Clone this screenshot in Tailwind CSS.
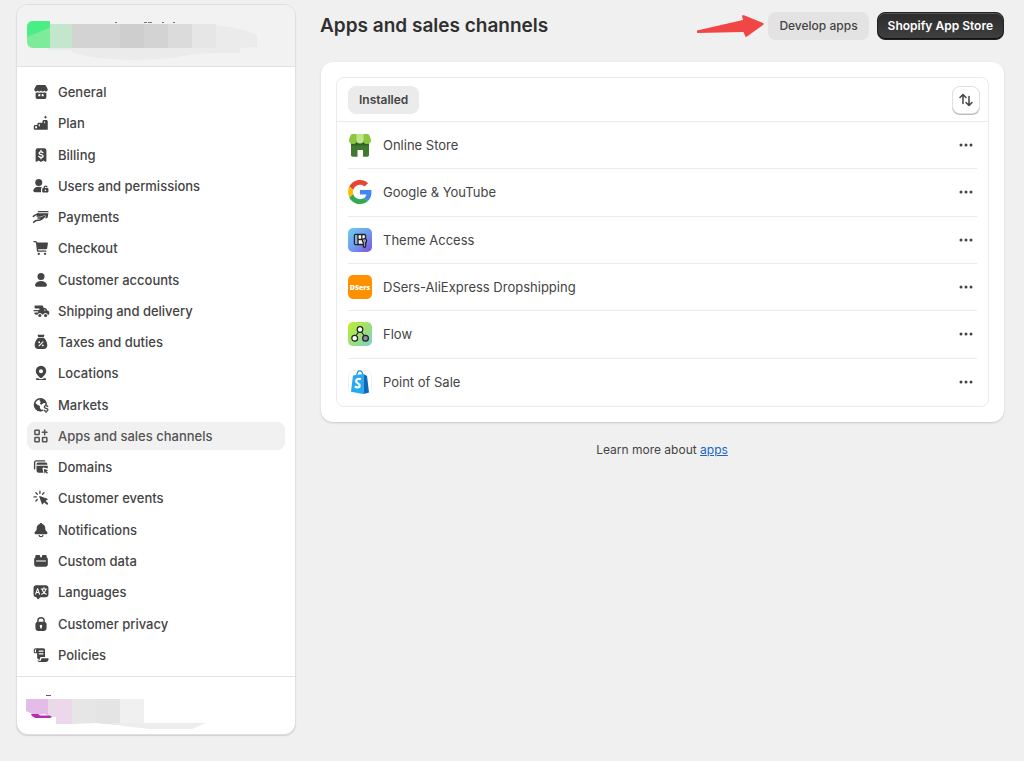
<!DOCTYPE html>
<html lang="en">
<head>
<meta charset="utf-8">
<meta name="viewport" content="width=device-width, initial-scale=1">
<title>Apps and sales channels</title>
<script src="https://cdn.jsdelivr.net/npm/@tailwindcss/browser@4"></script>
</head>
<body class="flex min-h-screen bg-[#f0f0f0] pt-1 pr-5 pb-[26px] pl-4 font-['Inter',sans-serif] text-[13px] leading-5 text-[#444]">

<aside class="flex w-[280px] shrink-0 flex-col overflow-hidden rounded-xl border border-[#dfdfdf] bg-white shadow-[0_1px_1px_#d0d0d0]">
  <header class="border-b border-[#e3e3e3] bg-[#f2f2f2] pl-[9px]">
    <!-- store badge with its name hidden -->
    <svg class="h-[61px] w-[240px]" viewBox="26 5 240 61" role="img" aria-label="Hidden store name">
      <path d="M72 48h138l30 5q-30-1-50 2-45 8-90 3-20-2-28-6z" fill="#ebebeb"/>
      <path d="M48 24h24v26H48z" fill="#c3e6cc"/>
      <path d="M48 48h24v2H48z" fill="#e5eee7"/>
      <path d="M33 21h17v27H33q-6 0-6-7V28q0-7 6-7z" fill="#7eeb9b"/>
      <path d="M33 21h15q2 0 2 2v3q0 2-6 4l-17 7V28q0-7 6-7z" fill="#4bee86"/>
      <path d="M72 24h48v24H72zM144 24h24v24h-24z" fill="#d3d3d3"/>
      <path d="M120 24h24v24h-24z" fill="#cecece"/>
      <path d="M168 24h24v24h-24z" fill="#dbdbdb"/>
      <path d="M192 24h24v29h-24z" fill="#e6e6e6"/>
      <path d="M216 25q30 4 41 10v12l-17 1v5h-24z" fill="#ebebeb"/>
      <path d="M192 48h24v5h-24z" fill="#ebebeb"/>
      <path d="M115 22h2v1h-2zM144 22h3v1h-3zM148 22h4v1h-4zM162 22h2v1h-2zM173 22h2v1h-2z" fill="#777"/>
    </svg>
  </header>

  <nav class="flex flex-1" aria-label="Settings">
    <ul class="flex flex-1 flex-col justify-between px-2.5 pt-[11px] pb-[7px] font-medium">
      <li><a href="#" class="flex h-7 items-center gap-2 rounded-lg pl-[5px]">
        <svg class="size-[18px]" viewBox="0 0 20 20" fill="currentColor"><path d="M6 2.2h8c.7 0 1.2.3 1.5.9l1.7 3.3c.2.4.3.8.3 1.2a2 2 0 0 1-3.8.7 2.2 2.2 0 0 1-3.7 0 2.2 2.2 0 0 1-3.7 0 2 2 0 0 1-3.8-.7c0-.4.1-.8.3-1.2l1.7-3.3c.3-.6.8-.9 1.5-.9z"/><path fill-rule="evenodd" d="M4 10.8c.9.1 1.800-.1 2.400-.6 1.100.8 2.600.8 3.600 0 1.100.8 2.600.8 3.600 0 .6.5 1.500.7 2.400.6v4.700c0 1.400-1 2.300-2.300 2.300H6.300C5 17.800 4 16.900 4 15.500zm4.300 1.500c-.7 0-1.300.6-1.300 1.200v1.200h2.200v-2.400zm2.500 0v2.400H13v-1.200c0-.6-.6-1.200-1.300-1.200z"/></svg>General</a></li>
      <li><a href="#" class="flex h-7 items-center gap-2 rounded-lg pl-[5px]">
        <svg class="size-[18px]" viewBox="0 0 20 20" fill="currentColor"><path d="m15 1.500.6 1.400 1.400.6-1.400.6-.6 1.400-.6-1.400-1.400-.6 1.400-.6z"/><path fill-rule="evenodd" d="M13.300 6.700h2.500c1 0 1.700.7 1.700 1.600v9.200h-14c-.9 0-1.500-.6-1.500-1.500v-2.300c0-1 .7-1.600 1.600-1.600h2.300v-.8c0-.9.700-1.600 1.600-1.600h4.100v-1.400c0-.9.700-1.600 1.700-1.600zM3.500 13.600v2.300h2.100v-2.300zm4-2.200v2.300h1.300v-2.300zm6-3v2h1v-2z"/></svg>Plan</a></li>
      <li><a href="#" class="flex h-7 items-center gap-2 rounded-lg pl-[5px]">
        <svg class="size-[18px]" viewBox="0 0 20 20"><path fill="currentColor" d="M4 5a2.500 2.500 0 0 1 2.500-2.500h7A2.500 2.500 0 0 1 16 5v11.800c0 .7-.8 1-1.300.6L12.800 16 10.500 17.500a1 1 0 0 1-1 0L7.200 16l-1.900 1.400c-.5.4-1.300.1-1.300-.6z"/><path d="M12.200 7.500c-.5-.8-1.200-1-2.200-1-1.200 0-2.100.5-2.100 1.500 0 2.200 4.400 1 4.400 3.200 0 1-1 1.600-2.300 1.600-1.100 0-1.900-.4-2.400-1.200M10 4.800v1.700m0 6.300v1.400" fill="none" stroke="#fff" stroke-width="1.500" stroke-linecap="round"/></svg>Billing</a></li>
      <li><a href="#" class="flex h-7 items-center gap-2 rounded-lg pl-[5px]">
        <svg class="size-[18px]" viewBox="0 0 20 20" fill="currentColor"><circle cx="7.500" cy="6.200" r="3.900"/><path d="M1.500 14.500c.7-2.500 3-3.800 6-3.800 1.400 0 2.600.3 3.600.8-.8.7-1.100 1.500-1.100 2.500v3H3.200c-1.300 0-2-1.200-1.700-2.500z"/><path fill-rule="evenodd" d="M12.700 12.200v-.4a2.500 2.500 0 0 1 4.900-.6l-1.400.5a1 1 0 0 0-2 .1v.4h2.600c.9 0 1.500.6 1.500 1.500v2c0 1-.6 1.600-1.500 1.600h-4c-.9 0-1.500-.6-1.500-1.600v-2c0-.8.6-1.500 1.400-1.500zm2.100 1.600a.9.900 0 1 0 .1 1.800.9.900 0 0 0-.1-1.800z"/></svg>Users and permissions</a></li>
      <li><a href="#" class="flex h-7 items-center gap-2 rounded-lg pl-[5px]">
        <svg class="size-[18px]" viewBox="0 0 20 20" fill="currentColor"><path d="M8.300 3.400h9c.7 0 1.200.6 1.100 1.300H6c.3-.8 1.200-1.300 2.300-1.300zM5.600 5.900h12.600l-.7 4.200c-.2.900-.9 1.400-1.700 1.400h-1.500l.9-1.100c1-1.300-.3-2.700-1.800-2.100L9 9.700H4.900z"/><path d="M1.500 9.300C4 6.900 5 6.700 7 6.700M1.800 15.700c1.400-1.600 2.700-2.100 4.700-2.100 3.600.1 5-1 7.700-4.400L9.800 11H6.600" fill="none" stroke="currentColor" stroke-width="1.700" stroke-linecap="round" stroke-linejoin="round"/></svg>Payments</a></li>
      <li><a href="#" class="flex h-7 items-center gap-2 rounded-lg pl-[5px]">
        <svg class="size-[18px]" viewBox="0 0 20 20" fill="currentColor"><path d="M2.200 2.900h1.500c.7 0 1.300.5 1.400 1.200l1.200 9.300h9" fill="none" stroke="currentColor" stroke-width="1.500" stroke-linecap="round" stroke-linejoin="round"/><path d="M5.200 3.800h11.400c.7 0 1.200.6 1.100 1.200l-.8 5c-.1.900-.8 1.500-1.600 1.500H6.200z"/><circle cx="7.500" cy="16.500" r="1.300"/><circle cx="14.500" cy="16.500" r="1.300"/></svg>Checkout</a></li>
      <li><a href="#" class="flex h-7 items-center gap-2 rounded-lg pl-[5px]">
        <svg class="size-[18px]" viewBox="0 0 20 20" fill="currentColor"><circle cx="10" cy="6" r="3.900"/><path d="M3.500 15c.8-2.600 3.300-4 6.500-4s5.700 1.400 6.500 4c.4 1.400-.4 2.500-1.700 2.500H5.200c-1.300 0-2.100-1.100-1.700-2.500z"/></svg>Customer accounts</a></li>
      <li><a href="#" class="flex h-7 items-center gap-2 rounded-lg pl-[5px]">
        <svg class="size-[18px]" viewBox="0 0 20 20" fill="currentColor"><path d="M3.800 4h7.500c.6 0 1 .4 1.200.9l.5 1.800h1.500c.6 0 1.200.3 1.500.9l1 1.900c1.400.3 2.200 1.100 2.200 2.400v1c0 .8-.6 1.500-1.500 1.600a2.700 2.700 0 0 0-5.200-.6h-1.200a2.700 2.700 0 0 0-5.100.2L3.500 14c-.5-.3-.8-.8-.8-1.400v-.9h3.800a.8.800 0 0 0 0-1.500H1.800V8.800h6a.8.800 0 0 0 0-1.500H3V5.500H2.800C2.500 4.800 3 4 3.800 4z"/><path d="M13.500 8.200h1l.8 1.500h-1.500z" fill="#fff"/><circle cx="8.700" cy="14.900" r="1.700"/><circle cx="15.100" cy="14.900" r="1.700"/></svg>Shipping and delivery</a></li>
      <li><a href="#" class="flex h-7 items-center gap-2 rounded-lg pl-[5px]">
        <svg class="size-[18px]" viewBox="0 0 20 20"><path fill="currentColor" d="M7.300 1.800c.9.500 1.800.6 2.700 0 .9.600 1.800.5 2.700 0 .6-.2 1.100.4.900 1L13 4.700H7l-.6-1.900c-.2-.6.300-1.200.9-1zM6.600 5.600h6.800c2.300 2 3.600 5.300 3.600 8.100 0 2.500-1.500 4.100-4 4.100H7c-2.500 0-4-1.600-4-4.100 0-2.800 1.300-6.100 3.600-8.100z"/><path d="m7.800 14.200 4.400-4.400" stroke="#fff" stroke-width="1.200" stroke-linecap="round"/><circle cx="8" cy="10.300" r="1" fill="#fff"/><circle cx="12" cy="13.800" r="1" fill="#fff"/></svg>Taxes and duties</a></li>
      <li><a href="#" class="flex h-7 items-center gap-2 rounded-lg pl-[5px]">
        <svg class="size-[18px]" viewBox="0 0 20 20" fill="currentColor"><path fill-rule="evenodd" d="M10 2a5.800 5.800 0 0 1 5.800 5.800c0 3.300-2.300 5-4.300 7.200-.8.900-2.200.9-3 0-2-2.200-4.300-3.900-4.300-7.200A5.800 5.800 0 0 1 10 2zm0 3.700a2.300 2.300 0 1 0 0 4.600 2.300 2.300 0 0 0 0-4.600z"/><path d="M5.300 15.700h1.500c1.700 1.700 4.700 1.700 6.400 0h1.500a1 1 0 0 1 0 2H5.300a1 1 0 0 1 0-2z"/></svg>Locations</a></li>
      <li><a href="#" class="flex h-7 items-center gap-2 rounded-lg pl-[5px]">
        <svg class="size-[18px]" viewBox="0 0 20 20"><circle cx="9.300" cy="9.700" r="6.600" fill="#fff" stroke="currentColor" stroke-width="1.600"/><path fill="currentColor" d="M3 7.500 6.500 10l2.300 1v2.200l1.500 2v1.700C6 17.500 2.500 14 2.500 9.800zM9.500 3.200 8.300 5.300l1.500 1.500L8.700 8.500l1.800 1.300 2.300-2h3l-1.600-3.300L11 3z"/><path fill="#fff" d="M12.200 9.500h7v10h-7z"/><path d="M17.500 11.700c-.4-.8-1.100-1-1.900-1-1.100 0-1.900.5-1.900 1.500 0 2.200 4 1 4 3.200 0 1-.9 1.600-2.100 1.600-1 0-1.700-.4-2.200-1.200m2.200-6.400v1.300m0 6.300v1.200" fill="none" stroke="currentColor" stroke-width="1.500" stroke-linecap="round"/></svg>Markets</a></li>
      <li><a href="#" aria-current="page" class="flex h-7 items-center gap-2 rounded-lg bg-[#f1f1f1] pl-[5px] text-[#555]">
        <svg class="size-[18px]" viewBox="0 0 20 20" fill="none" stroke="currentColor" stroke-width="1.700" stroke-linecap="round" stroke-linejoin="round"><rect x="3.200" y="3.500" width="4.800" height="4.800" rx=".6"/><rect x="3.200" y="11.700" width="4.800" height="4.800" rx=".6"/><rect x="11.700" y="11.700" width="4.800" height="4.800" rx=".6"/><path d="M14.100 3.300v5.200M11.500 5.900h5.200"/></svg>Apps and sales channels</a></li>
      <li><a href="#" class="flex h-7 items-center gap-2 rounded-lg pl-[5px]">
        <svg class="size-[18px]" viewBox="0 0 20 20" fill="currentColor"><path d="M2.900 12V5.200c0-1.200.8-2 2-2H14" fill="none" stroke="currentColor" stroke-width="1.500" stroke-linecap="round"/><path d="M5 6.800C5 5.800 5.800 5 6.800 5h8.400c1 0 1.800.8 1.800 1.800v.7H5zM5 8.700h12.500v3.100l-4.300-1.200c-1-.3-1.900.6-1.600 1.600l1.200 4.100H7a2 2 0 0 1-2-2z"/><path d="m13 12 5 1.700-2 1 1.700 1.800-1 1-1.800-1.800-.9 1.900z"/></svg>Domains</a></li>
      <li><a href="#" class="flex h-7 items-center gap-2 rounded-lg pl-[5px]">
        <svg class="size-[18px]" viewBox="0 0 20 20" fill="currentColor"><path d="m8.600 7.800 8.400 2.900c.6.200.6 1 .1 1.300l-2 1 2.600 2.700c.7.700-.8 2.300-1.600 1.600l-2.700-2.600-1.100 2.100c-.3.600-1.100.5-1.300-.1L8 8.400c-.1-.4.200-.7.600-.6z"/><path d="M8.800 2.500v2.400M4.300 4.200l1.600 1.600M13.300 4.200l-1.600 1.600M2.300 8.800h2.500M4.300 13.300l1.600-1.600" fill="none" stroke="currentColor" stroke-width="1.400" stroke-linecap="round"/></svg>Customer events</a></li>
      <li><a href="#" class="flex h-7 items-center gap-2 rounded-lg pl-[5px]">
        <svg class="size-[18px]" viewBox="0 0 20 20" fill="currentColor"><path d="M10 2.200c.7 0 1.200.5 1.300 1.100 2.100.5 3.500 2.300 3.500 4.500v1.400c0 .7.300 1.200.8 1.700l1 1c1.200 1.200.5 2.900-1 2.900H4.400c-1.500 0-2.200-1.700-1-2.900l1-1c.5-.5.8-1 .8-1.700V7.800c0-2.200 1.400-4 3.500-4.500.1-.6.600-1.100 1.300-1.100z"/><path d="M7.800 15.500c.2 2.600 4.200 2.600 4.400 0" fill="none" stroke="currentColor" stroke-width="1.400"/></svg>Notifications</a></li>
      <li><a href="#" class="flex h-7 items-center gap-2 rounded-lg pl-[5px]">
        <svg class="size-[18px]" viewBox="0 0 20 20" fill="currentColor"><path fill-rule="evenodd" d="M5.200 3.200h2.300c.9 0 1.500.6 1.500 1.500v1h2v-1c0-.9.600-1.500 1.500-1.500h2.300c.9 0 1.500.6 1.500 1.500V6c.8.300 1.300 1 1.300 1.900v5.800c0 1.600-1 2.600-2.600 2.600H5c-1.600 0-2.600-1-2.600-2.600V7.900c0-.9.500-1.600 1.300-1.900V4.700c0-.9.600-1.500 1.500-1.500z"/><path d="M4.500 10h11" stroke="#fff" stroke-width="1.300"/></svg>Custom data</a></li>
      <li><a href="#" class="flex h-7 items-center gap-2 rounded-lg pl-[5px]">
        <svg class="size-[18px]" viewBox="0 0 20 20"><path fill="currentColor" d="M4.700 2.500h10.600c1.800 0 3 1.200 3 3v7.200c0 1.800-1.200 3-3 3H9.200l-1.700 2c-.4.500-1 .5-1.300 0l-1.300-2c-1.900 0-3.200-1.200-3.200-3V5.500c0-1.800 1.200-3 3-3z"/><path d="m4 12.400 2.200-6.200 2.200 6.200M4.800 10.500h2.800M10.300 6.600h6M13.300 5v1.600m2 0c-.3 2.600-2 4.700-4.600 5.800m.6-5.800c.4 2.600 2 4.700 4.600 5.800" fill="none" stroke="#fff" stroke-width="1.200" stroke-linecap="round" stroke-linejoin="round"/></svg>Languages</a></li>
      <li><a href="#" class="flex h-7 items-center gap-2 rounded-lg pl-[5px]">
        <svg class="size-[18px]" viewBox="0 0 20 20" fill="currentColor"><path fill-rule="evenodd" d="M5.700 7.800V6.500a4.300 4.300 0 0 1 8.600 0v1.300c1.100.3 1.900 1.200 1.900 2.500v4.200c0 2-1.300 3.300-3.300 3.300H7.100c-2 0-3.300-1.300-3.300-3.300v-4.200c0-1.300.8-2.200 1.900-2.500zm1.600-.3h5.400v-1a2.700 2.700 0 0 0-5.400 0zM10 10.800c-1.300 0-1.900 1.400-1 2.300v1.200c0 1.200 2 1.200 2 0v-1.200c.9-.9.300-2.300-1-2.300z"/></svg>Customer privacy</a></li>
      <li><a href="#" class="flex h-7 items-center gap-2 rounded-lg pl-[5px]">
        <svg class="size-[18px]" viewBox="0 0 20 20"><path fill="currentColor" d="M4 2.500h8.500c1.200 0 2 .8 2 2v7.800h-4c-1.200 0-1.800.8-1.800 1.700v1.300c-1.900 0-3-1-3-2.800V8H2.900c-.5 0-.9-.4-.9-.9V4.500c0-1.200.8-2 2-2z"/><path fill="currentColor" d="M11 13.700h6.700c.6 0 .9.400.8 1-.2 1.800-1.400 3-3.200 3H9c-1.700 0-3-1-3.300-2 .8.600 1.700.8 3 .8 1.100 0 1.400-.5 1.400-1.500 0-.8.300-1.300.9-1.300z"/><path d="M3.800 4.300v2.200M8 5.700h4.200M8 8.700h4.200" stroke="#fff" stroke-width="1.300" stroke-linecap="round"/></svg>Policies</a></li>
    </ul>
  </nav>

  <footer class="border-t border-[#e3e3e3] pl-2">
    <!-- account badge with its name hidden -->
    <svg class="h-[57px] w-[200px]" viewBox="25 677 200 57" role="img" aria-label="Hidden account name">
      <path d="M26 699h22v17l-3-2-10 1-9-4z" fill="#e4bce8"/>
      <path d="M48 699h24v25H56v-7l-8-1z" fill="#ecd8ea"/>
      <path d="M48 699h8v18l-8-1z" fill="#e8dbe7"/>
      <path d="M72 699h48v26l-24-2-24 1z" fill="#e6e6e6"/>
      <path d="M96 699h24v26l-24-2z" fill="#e4e4e4"/>
      <path d="M120 699h24v25h-24z" fill="#f0f0f0"/>
      <path d="M112 723h94l-14 6h-42l-28-3z" fill="#ededed"/>
      <path d="M31 714h7l2 1.500h10l2 1.500-2 1H36q-4-1-5-4z" fill="#b32fae"/>
      <path d="M46 695h5v1h-5z" fill="#8a3f96"/>
    </svg>
  </footer>
</aside>

<main class="ml-6 flex-1 pt-2">
  <div class="flex items-center">
    <h1 class="flex-1 text-[19px] leading-7 font-semibold text-[#303030]">Apps and sales channels</h1>
    <svg class="mr-1 h-[22px] w-[68px]" viewBox="0 0 68 22" fill="#f14646" aria-hidden="true"><path d="M1 15.500 47 5l-1-4c0-1 1-1 2-.7l19 7.700c1 .5 1 1.500 0 2L51 21.500c-1 .7-2 .3-2-1L47.500 17 1 18z"/></svg>
    <div class="flex gap-2 text-[12px] leading-4">
      <button type="button" class="h-7 rounded-lg bg-[#e3e3e3] px-[11px] font-medium">Develop apps</button>
      <button type="button" class="h-7 rounded-lg border border-[#222] bg-linear-to-b from-[#2c2c2c] to-[#404040] px-2.5 font-semibold text-white shadow-[inset_0_1px_0_#555,inset_0_-1px_0_#111]">Shopify App Store</button>
    </div>
  </div>

  <section class="mt-[22px] ml-px rounded-xl bg-white p-[15px] shadow-[0_1px_2px_#c8c8c8]">
    <div class="rounded-lg border border-[#ebebeb]">
      <div class="flex items-center justify-between border-b border-[#ebebeb] pt-2 pr-2 pb-[7px] pl-[11px]">
        <button type="button" class="h-7 rounded-lg bg-[#ebebeb] px-[11px] text-[12px] leading-4 font-semibold">Installed</button>
        <button type="button" aria-label="Sort" class="grid size-7 place-items-center rounded-lg border border-[#e0e0e0] bg-white shadow-[0_1px_0_#bbb]">
          <svg class="size-[18px]" viewBox="0 0 18 18" fill="none" stroke="currentColor" stroke-width="1.500" stroke-linecap="round" stroke-linejoin="round"><path d="M6 12.500v-9M3 6.500l3-3 3 3M12 5.500v9M9 11.500l3 3 3-3"/></svg>
        </button>
      </div>
      <ul class="grid h-[284px] auto-rows-fr divide-y divide-[#ebebeb] px-[11px]">
        <li class="flex items-center gap-[11px]">
          <svg class="size-6" viewBox="0 0 24 24"><path d="M3 8h18v14c0 1-.7 1.700-1.700 1.700H15V17H9.500v6.700H4.700c-1 0-1.700-.7-1.700-1.700z" fill="#407a30"/><path d="M3 8h18v4.500H3z" fill="#2f6326"/><path d="M4.500 1H9v6a4 4 0 0 1-8 0c0-1 .6-2 1-3 .6-1.800 1-3 2.500-3zM19.500 1H15v6a4 4 0 0 0 8 0c0-1-.6-2-1-3-.6-1.800-1-3-2.500-3z" fill="#8cc63f"/><path d="M8.500 1h7v6a3.500 3.500 0 0 1-7 0z" fill="#bfe58a"/></svg>
          <span class="flex-1">Online Store</span>
          <button type="button" aria-label="Actions for Online Store" class="-mr-px grid h-7 w-6 place-items-center"><svg class="h-1 w-[14px]" viewBox="0 0 14 4" fill="currentColor"><circle cx="2" cy="2" r="1.500"/><circle cx="7" cy="2" r="1.500"/><circle cx="12" cy="2" r="1.500"/></svg></button>
        </li>
        <li class="flex items-center gap-[11px]">
          <svg class="size-6" viewBox="0 0 48 48"><path fill="#ea4335" d="M24 9.500c3.540 0 6.710 1.220 9.210 3.600l6.850-6.850C35.900 2.380 30.470 0 24 0 14.620 0 6.510 5.380 2.560 13.220l7.980 6.190C12.430 13.720 17.740 9.500 24 9.500z"/><path fill="#4285f4" d="M46.980 24.550c0-1.570-.15-3.090-.38-4.550H24v9.020h12.940c-.58 2.960-2.260 5.480-4.780 7.180l7.730 6c4.510-4.180 7.090-10.360 7.090-17.650z"/><path fill="#fbbc05" d="M10.530 28.590A14.500 14.500 0 0 1 9.770 24c0-1.600.27-3.140.76-4.590l-7.980-6.190A24 24 0 0 0 0 24c0 3.880.92 7.540 2.560 10.780z"/><path fill="#34a853" d="M24 48c6.480 0 11.930-2.130 15.890-5.810l-7.730-6c-2.150 1.450-4.920 2.300-8.160 2.300-6.260 0-11.570-4.220-13.470-9.910l-7.980 6.190C6.510 42.620 14.620 48 24 48z"/></svg>
          <span class="flex-1">Google &amp; YouTube</span>
          <button type="button" aria-label="Actions for Google &amp; YouTube" class="-mr-px grid h-7 w-6 place-items-center"><svg class="h-1 w-[14px]" viewBox="0 0 14 4" fill="currentColor"><circle cx="2" cy="2" r="1.500"/><circle cx="7" cy="2" r="1.500"/><circle cx="12" cy="2" r="1.500"/></svg></button>
        </li>
        <li class="flex items-center gap-[11px]">
          <svg class="size-6" viewBox="0 0 24 24"><defs><linearGradient id="theme" x1="0" y1="0" x2="1" y2="1"><stop stop-color="#6dcff0"/><stop offset=".5" stop-color="#6f9cf0"/><stop offset="1" stop-color="#8050dc"/></linearGradient></defs><rect width="24" height="24" rx="5" fill="url(#theme)"/><rect x="6.500" y="6.500" width="11" height="10" rx="1" fill="#fff" stroke="#222" stroke-width="1.400"/><path d="M7 7h3v9H7z" fill="#8ad"/><path d="M10 6.500v10M10 11.500h7M13.800 6.500v5" stroke="#222" stroke-width="1.300"/><path d="M16.500 10.500a2.200 2.200 0 0 1 1.200 4v4l-1.200 1.200-1.200-1.200v-4a2.200 2.200 0 0 1 1.200-4z" fill="#9b97b8" stroke="#222" stroke-width="1.200"/></svg>
          <span class="flex-1">Theme Access</span>
          <button type="button" aria-label="Actions for Theme Access" class="-mr-px grid h-7 w-6 place-items-center"><svg class="h-1 w-[14px]" viewBox="0 0 14 4" fill="currentColor"><circle cx="2" cy="2" r="1.500"/><circle cx="7" cy="2" r="1.500"/><circle cx="12" cy="2" r="1.500"/></svg></button>
        </li>
        <li class="flex items-center gap-[11px]">
          <svg class="size-6" viewBox="0 0 24 24"><rect width="24" height="24" rx="5" fill="#ff9100"/><text x="12" y="14.500" text-anchor="middle" font-family="Open Sans, sans-serif" font-weight="800" font-size="7" fill="#fff">DSers</text></svg>
          <span class="flex-1">DSers-AliExpress Dropshipping</span>
          <button type="button" aria-label="Actions for DSers-AliExpress Dropshipping" class="-mr-px grid h-7 w-6 place-items-center"><svg class="h-1 w-[14px]" viewBox="0 0 14 4" fill="currentColor"><circle cx="2" cy="2" r="1.500"/><circle cx="7" cy="2" r="1.500"/><circle cx="12" cy="2" r="1.500"/></svg></button>
        </li>
        <li class="flex items-center gap-[11px]">
          <svg class="size-6" viewBox="0 0 24 24"><defs><linearGradient id="flow" x1="0" y1="0" x2="1" y2="1"><stop stop-color="#bdf02c"/><stop offset=".5" stop-color="#a0e070"/><stop offset="1" stop-color="#74d0d8"/></linearGradient></defs><rect width="24" height="24" rx="5" fill="url(#flow)"/><g stroke="#222" stroke-width="1.200"><path d="m11 9.500-3.300 4.500M13 9.500l3.500 4.500" fill="none"/><circle cx="12" cy="7.500" r="2.800" fill="#fff"/><circle cx="6.700" cy="16.200" r="2.900" fill="#fff"/><circle cx="17.500" cy="16.200" r="2.900" fill="#8d8d95"/></g></svg>
          <span class="flex-1">Flow</span>
          <button type="button" aria-label="Actions for Flow" class="-mr-px grid h-7 w-6 place-items-center"><svg class="h-1 w-[14px]" viewBox="0 0 14 4" fill="currentColor"><circle cx="2" cy="2" r="1.500"/><circle cx="7" cy="2" r="1.500"/><circle cx="12" cy="2" r="1.500"/></svg></button>
        </li>
        <li class="flex items-center gap-[11px]">
          <svg class="size-6" viewBox="0 0 24 24"><rect x=".5" y=".5" width="23" height="23" rx="5" fill="#fff" stroke="#f1f1f1"/><path d="M8.800 5.500C9 2.500 10.500.9 12 .9s2.500 1.600 2.600 4" fill="none" stroke="#1b8fd6" stroke-width="1.200"/><path d="M5 5.500 15.500 4v20L3 21.700z" fill="#25a9f2"/><path d="m15.500 4 3.500 2L21 22.500l-5.500 1.500z" fill="#0c68b8"/><path d="M12.800 9.400c-2.200-1.200-4.700-.3-4.700 1.600 0 2.300 3.700 2.400 3.600 4.700-.1 2-2.800 2.300-4.900.7" fill="none" stroke="#fff" stroke-width="2.200"/></svg>
          <span class="flex-1">Point of Sale</span>
          <button type="button" aria-label="Actions for Point of Sale" class="-mr-px grid h-7 w-6 place-items-center"><svg class="h-1 w-[14px]" viewBox="0 0 14 4" fill="currentColor"><circle cx="2" cy="2" r="1.500"/><circle cx="7" cy="2" r="1.500"/><circle cx="12" cy="2" r="1.500"/></svg></button>
        </li>
      </ul>
    </div>
  </section>

  <p class="mt-[18px] text-center text-[12px]">Learn more about <a href="#" class="text-[#1a66c4] underline">apps</a></p>
</main>
</body>
</html>
